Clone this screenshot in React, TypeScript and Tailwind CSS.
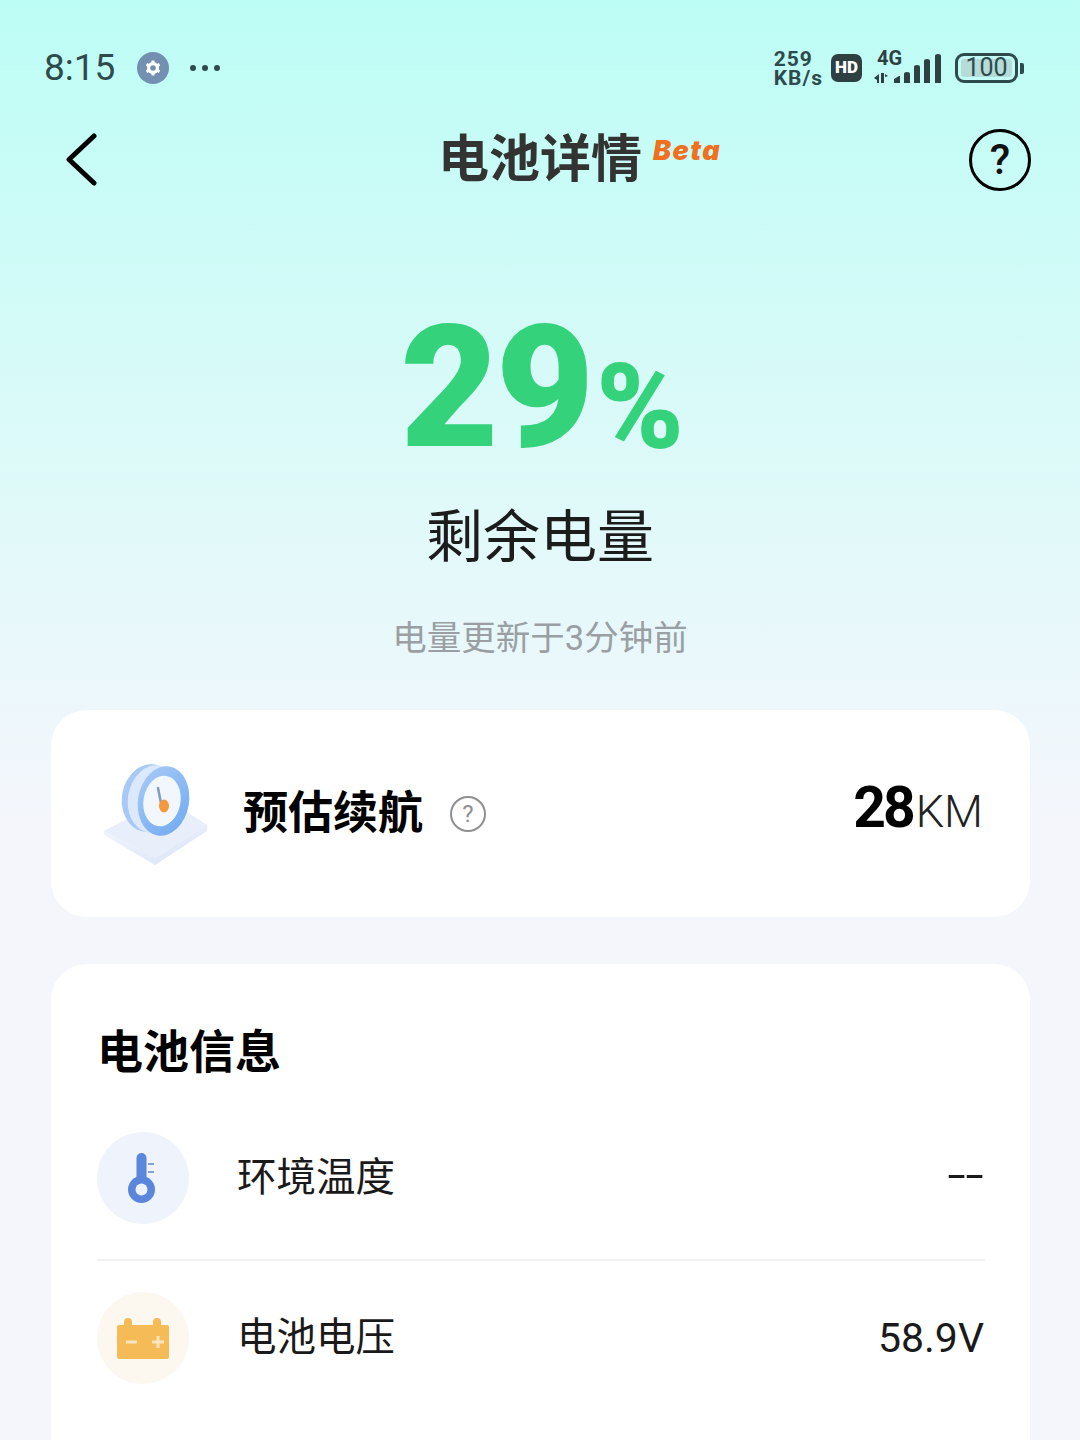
const cjk = "font-['Roboto','Noto_Sans_CJK_SC',sans-serif]";

function GearBadge() {
  return (
    <div className="w-8 h-8 rounded-full bg-[#7490b0] flex items-center justify-center">
      <svg width="18" height="18" viewBox="0 0 18 18">
        <circle cx="9" cy="9" r="6" fill="#fff" />
        <path d="M9 1.500v3M9 13.500v3M2.500 5.200l2.600 1.500M12.900 11.300l2.600 1.500M2.500 12.800l2.600-1.500M12.900 6.700l2.600-1.500" stroke="#fff" strokeWidth="3" />
        <circle cx="9" cy="9" r="2.800" fill="#7490b0" />
      </svg>
    </div>
  );
}

function StatusRight() {
  return (
    <div className="flex items-center">
      <div className="flex flex-col text-[#2f4a4c] font-['Roboto',sans-serif] font-bold text-[21px] leading-[19px] mt-[2px] tracking-[1px]">
        <span>259</span>
        <span>KB/s</span>
      </div>
      <div className="ml-[8px] w-[31px] h-[28px] rounded-[7px] bg-[#2f4043] flex items-center justify-center text-white text-[17px] font-black font-['Roboto',sans-serif]">
        HD
      </div>
      <div className="ml-[11px] relative w-[68px] h-[36px]">
        <svg width="68" height="36" viewBox="0 0 68 36">
          <path d="M1 28l5-4v9H4v-3zM8 23h3v10H8zM12 24l3 2-3 1z" fill="#2f4043" />
          <path d="M21 29l5-3h1v7h-6zM31 24q0-2 3-2t3 2v9h-6zM41 17q0-2 3-2t3 2v16h-6zM51 11q0-2 3-2t3 2v22h-6zM62 6q0-2 3-2t3 2v27h-6z" fill="#2f4043" />
        </svg>
        <span className="absolute left-[4px] top-[-2px] text-[20px] leading-[20px] font-bold text-[#2f4043] font-['Roboto',sans-serif]">4G</span>
      </div>
      <div className="ml-[14px] flex items-center">
        <div className="relative w-[63px] h-[30px] rounded-[9px] border-[3px] border-[#2f4a4c] p-[3px]">
          <div className="w-full h-full rounded-[3px] bg-[#b5dcd8]" />
          <span className="absolute inset-0 flex items-center justify-center text-[#2f4a4c] text-[25px] font-['Roboto',sans-serif]">100</span>
        </div>
        <div className="ml-[2px] w-[4px] h-[11px] rounded-r-[2px] bg-[#2f4a4c]" />
      </div>
    </div>
  );
}

function Gauge() {
  return (
    <svg width="104" height="104" viewBox="0 0 104 104">
      <defs>
        <linearGradient id="base" x1="0" y1="0" x2="1" y2="1">
          <stop offset="0" stopColor="#f2f5fc" />
          <stop offset="1" stopColor="#d9e4f7" />
        </linearGradient>
        <linearGradient id="ring" x1="0" y1="0" x2="1" y2="1">
          <stop offset="0" stopColor="#a9cbf7" />
          <stop offset="1" stopColor="#6fa9f0" />
        </linearGradient>
      </defs>
      <path d="M0 69L40 48h40l23 15-52 33z" fill="#e8eefa" />
      <path d="M0 69v4l51 30 52-34v-6L51 96z" fill="url(#base)" />
      <ellipse cx="45" cy="36" rx="27" ry="34" transform="rotate(10 45 36)" fill="#a8c9f5" />
      <ellipse cx="50" cy="37" rx="26" ry="34" transform="rotate(10 50 37)" fill="#dce9fc" />
      <ellipse cx="59.500" cy="39" rx="25.500" ry="35" transform="rotate(10 59.500 39)" fill="url(#ring)" />
      <ellipse cx="58" cy="39" rx="18.500" ry="25.500" transform="rotate(10 58 39)" fill="#f2f6fd" />
      <path d="M54 26l3 15" stroke="#7f9cc4" strokeWidth="2.500" strokeLinecap="round" />
      <ellipse cx="60" cy="44" rx="5" ry="6.500" fill="#f49a3d" />
    </svg>
  );
}

function Thermometer() {
  return (
    <svg className="mr-[3px]" width="27" height="50" viewBox="0 0 27 50">
      <path d="M8.500 5a5 5 0 0 1 10 0v26h-10z" fill="#5a86db" />
      <circle cx="13.500" cy="36.500" r="13.500" fill="#5a86db" />
      <circle cx="13.500" cy="36.500" r="6" fill="#eef2fc" />
      <path d="M20 11h6M20 19h6" stroke="#8aa0d0" strokeWidth="2" />
    </svg>
  );
}

function BatteryIcon() {
  return (
    <svg width="52" height="41" viewBox="0 0 52 41">
      <path d="M7 8V4q0-4 4-4t4 4v4zM36 8V4q0-4 4-4t4 4v4z" fill="#f4bb57" />
      <rect x="0" y="7" width="52" height="34" rx="2" fill="#f4bb57" />
      <path d="M9 24h11M35 24h12M41 18v12" stroke="#fbe6c0" strokeWidth="3" />
    </svg>
  );
}

function InfoRow({ icon, bg, label, value }: { icon: React.ReactNode; bg: string; label: string; value: React.ReactNode }) {
  return (
    <div className="flex items-center">
      <div className={`w-[92px] h-[92px] rounded-full flex items-center justify-center ${bg}`}>{icon}</div>
      <span className="ml-[48px] text-[39.500px] leading-[50px] text-[#1a1a1a]">{label}</span>
      <span className="ml-auto mr-[1px] text-[41px] leading-[50px] text-[#1a1a1a]">{value}</span>
    </div>
  );
}

export default function App() {
  return (
    <div className={`h-[1440px] overflow-hidden flex flex-col bg-gradient-to-b from-[#bcfdf5] to-[#f5f6fc] to-[58%] ${cjk}`}>
      <div className="h-[48px] shrink-0" />
      {/* status bar */}
      <div className="h-[40px] shrink-0 flex items-center justify-between pl-[44px] pr-[56px]">
        <div className="flex items-center">
          <span className="text-[37px] leading-[40px] text-[#2f4a4c] font-['Roboto',sans-serif]">8:15</span>
          <div className="ml-[22px]"><GearBadge /></div>
          <div className="ml-[21px] flex gap-[6px]">
            <i className="w-[6px] h-[6px] rounded-full bg-[#2f4a4c]" />
            <i className="w-[6px] h-[6px] rounded-full bg-[#2f4a4c]" />
            <i className="w-[6px] h-[6px] rounded-full bg-[#2f4a4c]" />
          </div>
        </div>
        <StatusRight />
      </div>

      {/* nav */}
      <div className="mt-[31px] h-[82px] shrink-0 relative flex items-center justify-between pl-[66px] pr-[49px]">
        <svg width="32" height="54" viewBox="0 0 32 54" fill="none">
          <path d="M28 3L3 26.500 28 50" stroke="#000" strokeWidth="5" strokeLinecap="round" strokeLinejoin="round" />
        </svg>
        <div className="absolute inset-0 flex items-center justify-center">
          <span className="relative text-[51px] leading-[60px] font-bold text-[#333]">
            电池详情
            <span className="absolute left-[215px] top-[5px] text-[27px] leading-[32px] font-black italic tracking-[1.5px] text-[#f0701f] font-['Inter',sans-serif]">Beta</span>
          </span>
        </div>
        <div className="w-[62px] h-[62px] rounded-full border-[3px] border-black flex items-center justify-center text-[42px] leading-none font-medium text-[#111]">?</div>
      </div>

      {/* hero */}
      <div className="mt-[101px] flex flex-col items-center shrink-0">
        <div className="h-[170px] flex items-end font-['Roboto',sans-serif] font-black text-[#35d27c]">
          <span className="text-[170px] leading-[168px] tracking-[-3px]">29</span>
          <span className="text-[118px] leading-[128px] tracking-[-4px] ml-[5px]">%</span>
        </div>
        <div className="mt-[31px] text-[57px] leading-[70px] text-[#1c1c1c]">剩余电量</div>
        <div className="mt-[42px] text-[34.500px] leading-[46px] text-[#9a9fa3]">电量更新于3分钟前</div>
      </div>

      {/* range card */}
      <div className="mt-[49px] ml-[51px] mr-[50px] shrink-0 h-[207px] rounded-[36px] bg-white flex items-center pl-[53px] pr-[47px]">
        <Gauge />
        <span className="ml-[35px] text-[45px] leading-[60px] font-bold text-black">预估续航</span>
        <div className="ml-[27px] w-[36px] h-[36px] rounded-full border-2 border-[#8f8f8f] flex items-center justify-center text-[24px] leading-none text-[#8f8f8f]">?</div>
        <div className="ml-auto flex items-baseline font-['Roboto',sans-serif] mb-[8px]">
          <span className="text-[57px] leading-[60px] font-bold tracking-[-3px] text-black">28</span>
          <span className="ml-[3px] text-[45px] leading-[60px] font-light text-[#222]">KM</span>
        </div>
      </div>

      {/* battery info */}
      <div className="mt-[47px] ml-[51px] mr-[50px] shrink-0 rounded-[36px] bg-white pl-[46px] pr-[45px] pt-[58px] pb-[200px]">
        <div className="text-[46px] leading-[60px] font-bold text-black">电池信息</div>
        <div className="mt-[50px]">
          <InfoRow
            icon={<Thermometer />}
            bg="bg-[#eff3fc]"
            label="环境温度"
            value={<span className="inline-block origin-right scale-x-[1.6] -translate-y-[3px]">--</span>}
          />
        </div>
        <div className="mt-[35px] h-[2px] bg-[#f1f2f2]" />
        <div className="mt-[31px]"><InfoRow icon={<BatteryIcon />} bg="bg-[#fdf8ef]" label="电池电压" value="58.9V" /></div>
      </div>
    </div>
  );
}
